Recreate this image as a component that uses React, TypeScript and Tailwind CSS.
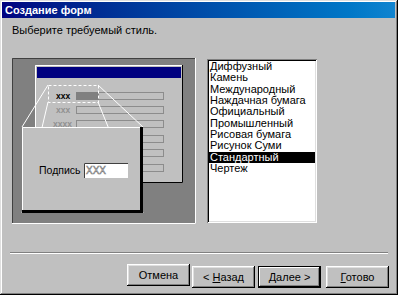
const styles = [
  "Диффузный",
  "Камень",
  "Международный",
  "Наждачная бумага",
  "Официальный",
  "Промышленный",
  "Рисовая бумага",
  "Рисунок Суми",
  "Стандартный",
  "Чертеж",
];

const raised =
  "shadow-[inset_-1px_-1px_#000,inset_1px_1px_#fff,inset_-2px_-2px_#808080,inset_2px_2px_#dfdfdf]";

function Preview() {
  const rows = [
    { y: 34, label: "xxx", bold: true },
    { y: 48, label: "xxx" },
    { y: 62, label: "xxxx" },
    { y: 77 },
    { y: 91 },
    { y: 106 },
  ];
  return (
    <svg width="184" height="166" viewBox="0 0 184 166" className="block">
      <rect x="0" y="0" width="184" height="166" fill="#808080" />
      <path d="M0 165V0H183" stroke="#404040" strokeWidth="1" fill="none" transform="translate(0.5 0.5)" />
      <path d="M0 165.5H183.5V0" stroke="#fff" strokeWidth="1" fill="none" />
      {/* little form behind */}
      <rect x="23" y="7" width="148" height="118" fill="#c0c0c0" />
      <path d="M23.5 125V7.5H171" stroke="#fff" fill="none" />
      <path d="M23 124.5H170.5V7" stroke="#000" fill="none" />
      <rect x="25" y="9" width="144" height="11" fill="#000080" />
      {rows.map((r, i) => (
        <g key={i}>
          {r.label && (
            <text
              x={r.label.length > 3 ? 41 : 44}
              y={r.y + 7}
              fontSize="8.5"
              fontWeight="bold"
              fontFamily="Liberation Sans, Arial, sans-serif"
              fill={r.bold ? "#000" : "#909090"}
            >
              {r.label}
            </text>
          )}
          <rect x="64.5" y={r.y + 0.5} width="87" height="7" fill="#c0c0c0" stroke="#8c8c8c" />
          {i === 0 && <rect x="64" y={r.y} width="23" height="8" fill="#808080" />}
        </g>
      ))}
      <rect x="36.5" y="27.5" width="50" height="17" fill="none" stroke="#fff" strokeDasharray="3 2" />
      <g stroke="#fff" strokeWidth="1">
        <line x1="36" y1="27" x2="10" y2="69" />
        <line x1="36" y1="44" x2="10" y2="155" />
        <line x1="86" y1="27" x2="131" y2="69" />
        <line x1="86" y1="44" x2="131" y2="155" />
      </g>
      {/* zoomed popup */}
      <rect x="10" y="69" width="121" height="86" fill="#c0c0c0" />
      <path d="M10.5 155V69.5H131" stroke="#fff" fill="none" />
      <path d="M10 153.5H129.5V69" stroke="#000" strokeWidth="3" fill="none" />
      <text x="27" y="116" fontSize="10.5" fontFamily="Liberation Sans, Arial, sans-serif" fill="#000">
        Подпись
      </text>
      <rect x="72" y="105" width="44" height="15" fill="#fff" />
      <path d="M72.5 120V105.5H116" stroke="#404040" fill="none" />
      <text
        x="74"
        y="116"
        fontSize="10"
        fontFamily="Liberation Sans, Arial, sans-serif"
        fill="#fff"
        stroke="#808080"
        strokeWidth="0.6"
      >
        XXX
      </text>
    </svg>
  );
}

function Button({ children, isDefault }: { children: React.ReactNode; isDefault?: boolean }) {
  return (
    <button
      className={`h-[22px] w-[63px] bg-[#c0c0c0] text-[11px] text-black ${
        isDefault
          ? "shadow-[inset_0_0_0_1px_#000,inset_-2px_-2px_#000,inset_2px_2px_#fff,inset_-3px_-3px_#808080]"
          : raised
      }`}
    >
      {children}
    </button>
  );
}

export default function App() {
  return (
    <div
      className="flex h-[295px] w-[398px] flex-col bg-[#c0c0c0] pl-[2px] pr-[3px] pt-[2px] shadow-[inset_-1px_-1px_#000,inset_1px_1px_#dfdfdf,inset_-2px_-2px_#808080,inset_2px_2px_#fff]"
      style={{ fontFamily: "'Liberation Sans', Arial, sans-serif" }}
    >
      <div className="flex h-[16px] items-center bg-gradient-to-r from-[#000080] to-[#1084d0] pl-[3px] text-[11px] font-bold text-white">
        Создание форм
      </div>
      <div className="mt-[6px] pl-[10px] text-[11px] leading-[13px] text-black">
        Выберите требуемый стиль.
      </div>
      <div className="mt-[21px] flex items-start pl-[10px]">
        <Preview />
        <div className="ml-[11px] mt-[1px] h-[164px] w-[110px] bg-white p-[2px] shadow-[inset_1px_1px_#808080,inset_-1px_-1px_#fff,inset_2px_2px_#000,inset_-2px_-2px_#dfdfdf]">
          {styles.map((s) => (
            <div
              key={s}
              className={`px-[1px] text-[11px] leading-[11.35px] ${
                s === "Стандартный" ? "bg-black text-white" : "text-black"
              }`}
            >
              {s}
            </div>
          ))}
        </div>
      </div>
      <div className="ml-[8px] mt-[28px] h-[2px] w-[378px] border-b border-t border-b-white border-t-[#808080]" />
      <div className="mr-[6px] mt-[10px] flex justify-end">
        <Button>Отмена</Button>
        <div className="ml-[2px]">
          <Button>
            &lt; <span className="underline">Н</span>азад
          </Button>
        </div>
        <div className="ml-[3px]">
          <Button isDefault>
            <span className="underline">Д</span>алее &gt;
          </Button>
        </div>
        <div className="ml-[5px]">
          <Button>
            <span className="underline">Г</span>отово
          </Button>
        </div>
      </div>
    </div>
  );
}
